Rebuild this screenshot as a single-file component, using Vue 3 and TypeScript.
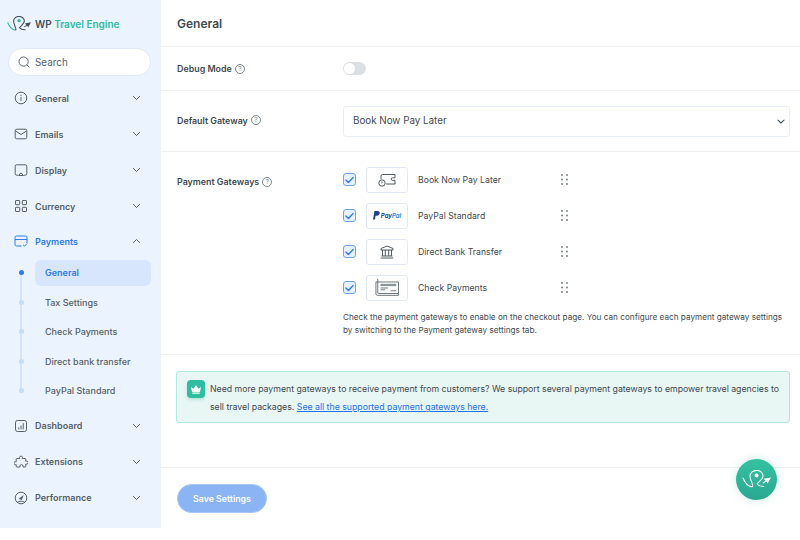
<script setup lang="ts">
type NavItem = { label: string; icon: string; open?: boolean }

const navTop: NavItem[] = [
  { label: 'General', icon: 'info' },
  { label: 'Emails', icon: 'mail' },
  { label: 'Display', icon: 'display' },
  { label: 'Currency', icon: 'grid' },
]
const navBottom: NavItem[] = [
  { label: 'Dashboard', icon: 'chart' },
  { label: 'Extensions', icon: 'puzzle' },
  { label: 'Performance', icon: 'gauge' },
]
const subItems = ['General', 'Tax Settings', 'Check Payments', 'Direct bank transfer', 'PayPal Standard']
const gateways = [
  { label: 'Book Now Pay Later', logo: 'later' },
  { label: 'PayPal Standard', logo: 'paypal' },
  { label: 'Direct Bank Transfer', logo: 'bank' },
  { label: 'Check Payments', logo: 'check' },
]
</script>

<template>
  <div class="page">
    <aside class="sidebar">
      <div class="brand">
        <svg class="brand-logo" viewBox="0 0 29 19" fill="none" stroke-linecap="round" stroke-width="1.300">
          <path d="M1 8C3 13 7 17.500 10.500 16.500" stroke="#2ebd9f" />
          <path d="M10.500 16.500C12 15.500 8 10.500 8 6.300A6.500 5.800 0 0 1 21 6C21 9 17 11.500 15 14Q17.500 16.800 22 16.500" stroke="#454f5b" />
          <circle cx="14.500" cy="5.500" r="2" fill="#2ebd9f" />
          <path d="M29 7.500L25.500 13.800 24.500 11.500 21 13.500 20.500 12.800 23.500 10.800 21.500 8.800z" fill="#454f5b" />
        </svg>
        <span class="brand-name">WP <em>Travel Engine</em></span>
      </div>

      <div class="search">
        <svg width="12" height="12" viewBox="0 0 14 14" fill="none" stroke="#566267" stroke-width="1.100">
          <circle cx="6.500" cy="6.500" r="5.400" />
          <path d="M10.500 10.500l2.500 2.500" stroke-linecap="round" />
        </svg>
        <span>Search</span>
      </div>

      <nav class="nav">
        <div v-for="item in navTop" :key="item.label" class="nav-item">
          <svg class="nav-icon" viewBox="0 0 14 14" fill="none" stroke="#566267" stroke-width="1">
            <template v-if="item.icon === 'info'">
              <circle cx="7" cy="7" r="5.800" />
              <path d="M7 6.500v3M7 4.300v.4" stroke-linecap="round" />
            </template>
            <template v-else-if="item.icon === 'mail'">
              <rect x="1.200" y="2.200" width="11.600" height="9.600" rx="1.500" />
              <path d="M1.500 4l5.500 3.500L12.500 4" />
            </template>
            <template v-else-if="item.icon === 'display'">
              <path d="M4 12.200H2.700a1.500 1.500 0 0 1-1.500-1.500V3.300a1.500 1.500 0 0 1 1.500-1.500h8.600a1.500 1.500 0 0 1 1.500 1.500v7.400a1.500 1.500 0 0 1-1.500 1.500H10" />
              <path d="M4.500 12.500L7 9.800l2.500 2.700z" />
            </template>
            <template v-else>
              <rect x="1.500" y="1.500" width="4.200" height="4.200" rx=".5" />
              <rect x="8.300" y="1.500" width="4.200" height="4.200" rx=".5" />
              <rect x="1.500" y="8.300" width="4.200" height="4.200" rx=".5" />
              <rect x="8.300" y="8.300" width="4.200" height="4.200" rx=".5" />
            </template>
          </svg>
          <span class="nav-label">{{ item.label }}</span>
          <svg class="chev" viewBox="0 0 10 6" fill="none" stroke="#566267" stroke-width="1.100">
            <path d="M1.500 1.200L5 4.700l3.500-3.500" stroke-linecap="round" stroke-linejoin="round" />
          </svg>
        </div>

        <div class="nav-item active">
          <svg class="nav-icon" viewBox="0 0 14 14" fill="none" stroke="#2f7bf0" stroke-width="1">
            <path d="M7.500 12H2.500A1.500 1.500 0 0 1 1 10.500v-7A1.500 1.500 0 0 1 2.500 2h9A1.500 1.500 0 0 1 13 3.500v5.500" />
            <path d="M1 5.500h12" />
            <path d="M9.300 11l1.300 1.200 2.200-2.400" stroke-linecap="round" />
          </svg>
          <span class="nav-label">Payments</span>
          <svg class="chev" viewBox="0 0 10 6" fill="none" stroke="#566267" stroke-width="1.100">
            <path d="M1.500 4.800L5 1.300l3.500 3.500" stroke-linecap="round" stroke-linejoin="round" />
          </svg>
        </div>

        <ul class="sub">
          <li v-for="(s, i) in subItems" :key="s" class="sub-item" :class="{ current: i === 0 }">
            <span class="dot"></span>
            <span class="sub-label">{{ s }}</span>
          </li>
        </ul>

        <div v-for="item in navBottom" :key="item.label" class="nav-item">
          <svg class="nav-icon" viewBox="0 0 14 14" fill="none" stroke="#566267" stroke-width="1">
            <template v-if="item.icon === 'chart'">
              <rect x="1.500" y="1.500" width="11" height="11" rx="2" />
              <path d="M4.800 10V8.800M7 10V7M9.200 10V4.500" stroke-linecap="round" />
            </template>
            <template v-else-if="item.icon === 'puzzle'">
              <path d="M5.500 2.500a1.500 1.500 0 0 1 3 .3l-.2.7h2.700a.8.800 0 0 1 .8.800v2l.8-.2a1.500 1.500 0 0 1 .2 3l-1-.1v2.200a.8.800 0 0 1-.8.800H9l.1-.8a1.600 1.600 0 0 0-3.200 0l.1.8H3a.8.800 0 0 1-.8-.8V9.500l-.7.200a1.500 1.500 0 0 1-.2-3l.9.100V4.300a.8.800 0 0 1 .8-.8h2.700z" stroke-linejoin="round" />
            </template>
            <template v-else>
              <circle cx="7" cy="7" r="5.800" />
              <path d="M4.500 7.800L9.800 4 7.800 9z" fill="#566267" stroke="none" />
              <path d="M3.200 11.300C4.500 9.800 9.500 9.800 10.800 11.300" />
            </template>
          </svg>
          <span class="nav-label">{{ item.label }}</span>
          <svg class="chev" viewBox="0 0 10 6" fill="none" stroke="#566267" stroke-width="1.100">
            <path d="M1.500 1.200L5 4.700l3.500-3.500" stroke-linecap="round" stroke-linejoin="round" />
          </svg>
        </div>
      </nav>
    </aside>

    <main class="main">
      <header class="head">General</header>

      <section class="row debug">
        <div class="field-label">
          Debug Mode
          <span class="help">?</span>
        </div>
        <div class="toggle"><span class="knob"></span></div>
      </section>

      <section class="row gateway">
        <div class="field-label lift">
          Default Gateway
          <span class="help">?</span>
        </div>
        <div class="select">
          <span class="select-text">Book Now Pay Later</span>
          <svg width="8" height="5" viewBox="0 0 10 6" fill="none" stroke="#3f4a50" stroke-width="1.300">
            <path d="M1.200 1.200L5 4.800l3.800-3.600" stroke-linecap="round" />
          </svg>
        </div>
      </section>

      <section class="row payments">
        <div class="field-label pay-label">
          Payment Gateways
          <span class="help">?</span>
        </div>
        <div class="pay-body">
          <div v-for="g in gateways" :key="g.label" class="gw">
            <span class="check">
              <svg width="9" height="8" viewBox="0 0 10 8" fill="none" stroke="#2f7bf0" stroke-width="1.500">
                <path d="M1 4l2.800 2.800L9 1.200" stroke-linecap="round" stroke-linejoin="round" />
              </svg>
            </span>
            <span class="logo-box">
              <svg v-if="g.logo === 'later'" width="18" height="14" viewBox="0 0 18 14" fill="none" stroke="#3f4a50" stroke-width=".9">
                <path d="M3 6V3a1.500 1.500 0 0 1 1.500-1.500H17v3.300h-2.500a1.300 1.300 0 0 0 0 2.600H17V11H8" />
                <circle cx="4" cy="10" r="3.200" />
                <path d="M4 8.500V10.500" />
              </svg>
              <span v-else-if="g.logo === 'paypal'" class="pp">
                <svg width="7" height="9" viewBox="0 0 7 9"><path d="M1.500 0h3C6.300 0 7 1 6.700 2.400 6.300 4 5 4.800 3.500 4.800H2.500L2 8.500H0z" fill="#1c3f94" /></svg>
                <b>Pay</b><i>Pal</i>
              </span>
              <svg v-else-if="g.logo === 'bank'" width="14" height="14" viewBox="0 0 14 14" fill="none" stroke="#3f4a50" stroke-width=".9">
                <path d="M7 1L1 3.500V5h12V3.500z" stroke-linejoin="round" />
                <path d="M2.500 5v6M5.300 5v6M8.700 5v6M11.500 5v6M1.500 11h11M.8 13h12.400" />
              </svg>
              <svg v-else width="24" height="19" viewBox="0 0 26 19" fill="none" stroke="#3f4a50" stroke-width=".8">
                <path d="M3 3.500H1v13c0 1 .8 1.500 2 1.500h22.500V3.500z" />
                <path d="M3 16V1c0-.5 0-.5-.8-.2" />
                <path d="M3.500 16H25" />
                <rect x="6" y="5.500" width="17" height="2.500" fill="#8a9499" stroke="none" />
                <path d="M6 10h8M6 12h5M17 13h6" />
              </svg>
            </span>
            <span class="gw-name">{{ g.label }}</span>
            <svg class="drag" width="7" height="11" viewBox="0 0 7 11" fill="#6b767c">
              <circle cx="1" cy="1" r=".9" /><circle cx="6" cy="1" r=".9" />
              <circle cx="1" cy="5.500" r=".9" /><circle cx="6" cy="5.500" r=".9" />
              <circle cx="1" cy="10" r=".9" /><circle cx="6" cy="10" r=".9" />
            </svg>
          </div>
          <p class="hint">
            Check the payment gateways to enable on the checkout page. You can configure each payment gateway settings
            by switching to the Payment gateway settings tab.
          </p>
        </div>
      </section>

      <div class="notice">
        <span class="crown">
          <svg width="12" height="10" viewBox="0 0 12 10" fill="#fff">
            <path d="M1 3l2.500 1.800L6 1l2.500 3.800L11 3l-1 5H2z" />
            <rect x="2.200" y="8.500" width="7.600" height="1.200" rx=".4" />
          </svg>
        </span>
        <div class="notice-text">
          <p>Need more payment gateways to receive payment from customers? We support several payment gateways to empower travel agencies to</p>
          <p>
            <span>sell travel packages. </span>
            <a href="#">See all the supported payment gateways here.</a>
          </p>
        </div>
      </div>

      <footer class="foot">
        <button class="save" type="button">Save Settings</button>
      </footer>
    </main>

    <div class="fab">
      <svg width="29" height="19" viewBox="0 0 29 19" fill="none" stroke="#fff" stroke-width="1.100" stroke-linecap="round">
        <path d="M1 8C3 13 7 17.500 10.500 16.500C12 15.500 8 10.500 8 6.300A6.500 5.800 0 0 1 21 6C21 9 17 11.500 15 14Q17.500 16.800 22 16.500" />
        <circle cx="14.500" cy="5.500" r="2" fill="#fff" stroke="none" />
        <path d="M29 7.500L25.500 13.800 24.500 11.500 21 13.500 20.500 12.800 23.500 10.800 21.500 8.800z" fill="#fff" stroke="none" />
      </svg>
    </div>
  </div>
</template>

<style scoped>
.page {
  position: relative;
  display: flex;
  width: 800px;
  height: 540px;
  overflow: hidden;
  background: #fff;
  font-family: Inter, 'Noto Sans', sans-serif;
  color: #3f4a50;
}

.sidebar {
  flex: none;
  width: 161px;
  height: 528px;
  padding: 0 10px 0 8px;
  box-sizing: border-box;
  background: #ebf3fe;
}

.brand {
  display: flex;
  align-items: center;
  gap: 4px;
  height: 47px;
}
.brand-logo {
  width: 24px;
  height: 16px;
  flex: none;
  margin-left: -1px;
}
.brand-name {
  font-size: 10px;
  font-weight: 600;
  color: #454f5b;
}
.brand-name em {
  font-style: normal;
  color: #2ebd9f;
}

.search {
  display: flex;
  align-items: center;
  gap: 5px;
  height: 26px;
  margin-top: 1px;
  padding-left: 9px;
  background: #fff;
  border: 1px solid #dfe9f8;
  border-radius: 14px;
  font-size: 9.900px;
  color: #566267;
}

.nav {
  margin-top: 4px;
}
.nav-item {
  display: flex;
  align-items: center;
  height: 36px;
  padding-left: 6px;
  font-size: 9px;
  font-weight: 600;
  color: #566267;
}
.nav-icon {
  width: 14px;
  height: 14px;
  flex: none;
}
.nav-label {
  margin-left: 7px;
}
.chev {
  width: 9px;
  height: 6px;
  margin-left: auto;
  margin-right: 10px;
}
.nav-item.active {
  height: 34px;
  color: #2f7bf0;
}

.sub {
  position: relative;
  margin: 0 0 2px;
  padding: 0;
  list-style: none;
}
.sub::before {
  content: '';
  position: absolute;
  left: 12px;
  top: 15px;
  bottom: 15px;
  width: 2px;
  background: #d3e4fb;
}
.sub-item {
  display: flex;
  align-items: center;
  height: 29.500px;
  font-size: 9px;
  font-weight: 500;
  color: #566267;
}
.dot {
  position: relative;
  flex: none;
  width: 5px;
  height: 5px;
  margin-left: 10.500px;
  border-radius: 50%;
  background: #c5dcfa;
}
.sub-label {
  display: flex;
  align-items: center;
  flex: 1;
  height: 26px;
  margin-left: 11.500px;
  padding-left: 10px;
  border-radius: 6px;
}
.sub-item.current {
  color: #2f7bf0;
  font-weight: 600;
}
.sub-item.current .dot {
  background: #2f7bf0;
}
.sub-item.current .sub-label {
  background: #d7e6fc;
}

.main {
  flex: 1;
  min-width: 0;
}
.head {
  display: flex;
  align-items: center;
  height: 47px;
  padding-left: 16px;
  border-bottom: 1px solid #eef0f3;
  font-size: 12px;
  font-weight: 600;
  color: #3f4a50;
  box-sizing: border-box;
}
.row {
  display: flex;
  align-items: center;
  padding: 0 10px 0 16px;
  border-bottom: 1px solid #eef0f3;
  box-sizing: border-box;
}
.debug {
  height: 44px;
}
.gateway {
  height: 61px;
}
.payments {
  align-items: flex-start;
  height: 203px;
}
.field-label {
  display: flex;
  align-items: center;
  flex: none;
  width: 166px;
  font-size: 8.900px;
  font-weight: 600;
  color: #3f4a50;
}
.lift {
  margin-bottom: 2px;
}
.help {
  display: inline-flex;
  align-items: center;
  justify-content: center;
  width: 10px;
  height: 10px;
  margin-left: 3px;
  box-sizing: border-box;
  border: 1px solid #7b858a;
  border-radius: 50%;
  font-size: 6.500px;
  font-weight: 400;
  color: #7b858a;
}
.pay-label {
  margin-top: 24px;
}

.toggle {
  width: 23px;
  height: 13px;
  padding: 1px;
  box-sizing: border-box;
  border-radius: 7px;
  background: #dcdfe1;
}
.knob {
  display: block;
  width: 11px;
  height: 11px;
  border-radius: 50%;
  background: #fff;
}

.select {
  display: flex;
  flex: 1;
  align-items: center;
  justify-content: space-between;
  height: 29px;
  padding: 0 4px 0 9px;
  border: 1px solid #e6eef9;
  border-radius: 3px;
  font-size: 9.800px;
  color: #3f4a50;
}
.select-text {
  margin-bottom: 2px;
}

.pay-body {
  flex: 1;
  padding-top: 14.600px;
}
.gw {
  display: flex;
  align-items: center;
  height: 26px;
  margin-bottom: 10px;
}
.check {
  display: flex;
  align-items: center;
  justify-content: center;
  flex: none;
  width: 13px;
  height: 13px;
  border: 1px solid #6ba4f3;
  border-radius: 3px;
  background: #e8f1fe;
  box-sizing: border-box;
}
.logo-box {
  display: flex;
  align-items: center;
  justify-content: center;
  flex: none;
  width: 42px;
  height: 26px;
  margin-left: 10px;
  box-sizing: border-box;
  border: 1px solid #dfe9f8;
  border-radius: 3px;
}
.pp {
  display: flex;
  align-items: center;
  gap: 1px;
  font-size: 6px;
  font-style: italic;
}
.pp b {
  color: #1c3f94;
  font-weight: 700;
}
.pp i {
  margin-left: -1px;
  color: #2b8fd6;
  font-weight: 700;
}
.gw-name {
  flex: none;
  width: 143px;
  margin-left: 10px;
  font-size: 8.700px;
  color: #3f4a50;
}
.drag {
  flex: none;
}
.hint {
  margin: 3px 0 0;
  font-size: 8.200px;
  line-height: 13px;
  color: #3f4a50;
}

.notice {
  display: flex;
  align-items: flex-start;
  margin: 16px 10px 0 15px;
  height: 52px;
  padding: 8px 6px 0 10px;
  box-sizing: border-box;
  background: #e8f6f4;
  border: 1px solid #b5e8dc;
  border-radius: 3px;
}
.crown {
  display: flex;
  align-items: center;
  justify-content: center;
  flex: none;
  width: 18px;
  height: 18px;
  border-radius: 4px;
  background: #2ebd9f;
  box-shadow: 0 2px 3px rgba(46, 189, 159, 0.25);
}
.notice-text {
  margin-left: 5px;
  font-size: 8.740px;
  line-height: 18px;
  color: #3f4a50;
}
.notice-text p {
  margin: 0;
}
.notice a {
  color: #1f73f1;
}

.foot {
  margin-top: 44px;
  padding: 16px 0 0 16px;
  border-top: 1px solid #eef0f3;
}
.save {
  width: 90px;
  height: 29px;
  border: 1px solid #a9c7f5;
  border-radius: 15px;
  background: #8ab4f3;
  color: #fff;
  font-family: inherit;
  font-size: 8.800px;
  font-weight: 600;
}

.fab {
  position: absolute;
  left: 736px;
  top: 459px;
  display: flex;
  align-items: center;
  justify-content: center;
  width: 41px;
  height: 41px;
  border-radius: 50%;
  background: linear-gradient(#34c19f, #2aa893);
  box-shadow: 0 0 10px rgba(46, 189, 159, 0.25);
}
</style>
